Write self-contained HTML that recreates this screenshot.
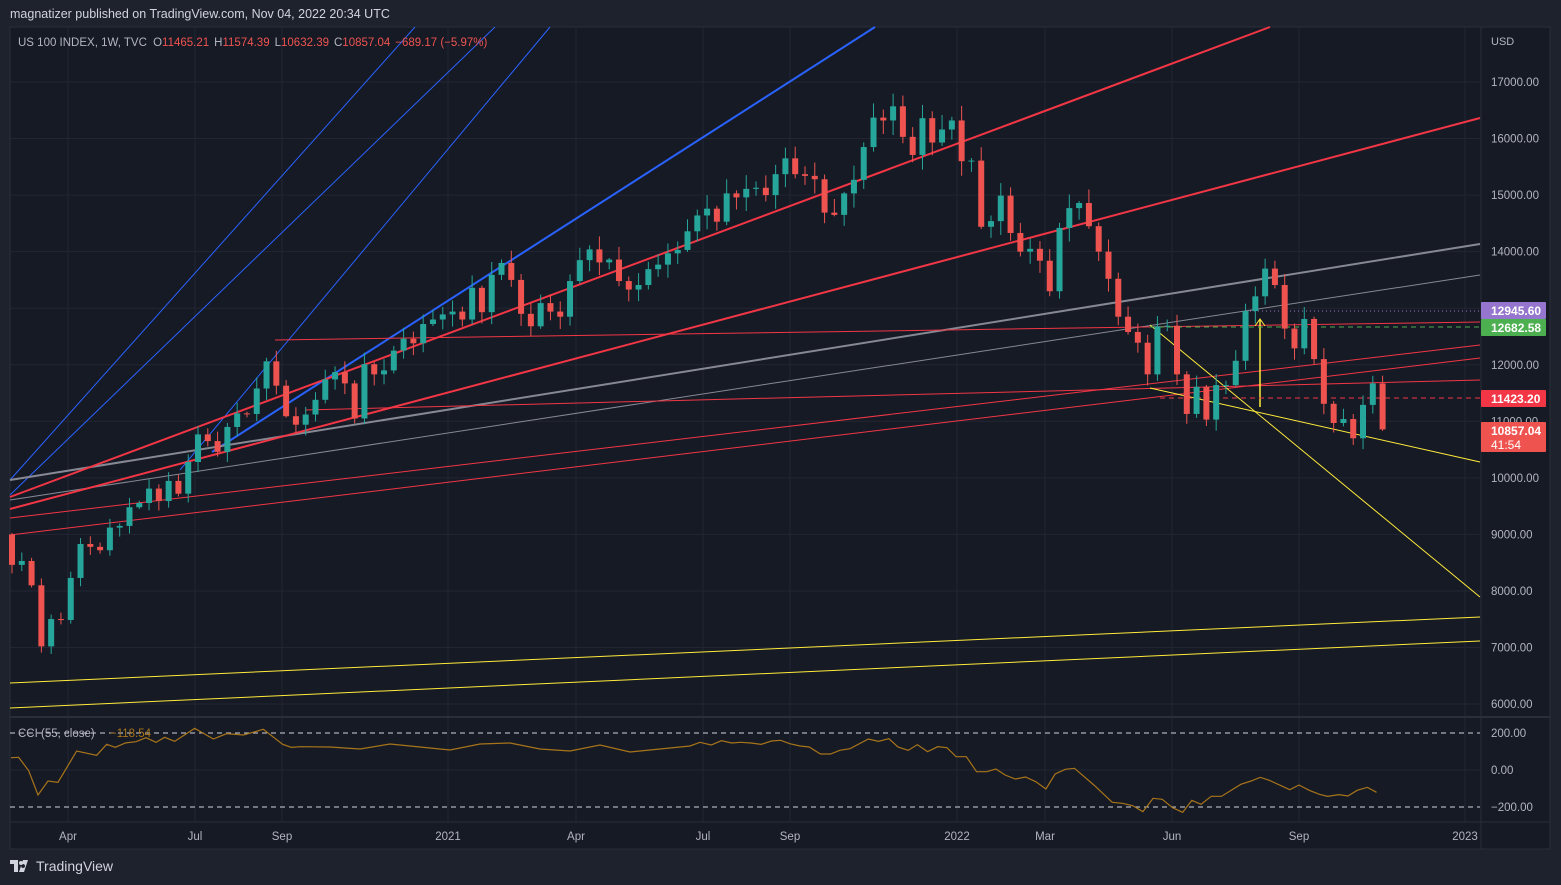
<!DOCTYPE html>
<html><head><meta charset="utf-8">
<style>
html,body{margin:0;padding:0;background:#1e222d;width:1561px;height:885px;overflow:hidden;font-family:"Liberation Sans",sans-serif}
#hdr{position:absolute;left:10px;top:7px;color:#d1d4dc;font-size:12.5px}
#foot{position:absolute;left:10px;top:858px;color:#d1d4dc;font-size:14px;display:flex;align-items:center;gap:4px}
svg{position:absolute;left:0;top:0}
</style></head><body>
<div id="hdr">magnatizer published on TradingView.com, Nov 04, 2022 20:34 UTC</div>
<svg id="s" width="1561" height="885" xmlns="http://www.w3.org/2000/svg" font-family="Liberation Sans, sans-serif"></svg>
<div id="foot"><svg width="22" height="14" style="position:static" viewBox="0 0 22 14"><path d="M0 1h8v12H4V5H0z M9 13l4-12h5l-4 12z M13 5a2 2 0 1 0 0.1 0" fill="#d1d4dc"/><circle cx="11" cy="4" r="2" fill="#d1d4dc"/></svg><span>TradingView</span></div>
<script>
const s=document.getElementById('s');let h='';
const Y=p=>82+(17000-p)*0.05655;
// frame
h+='<rect x="10" y="27" width="1540" height="822" fill="#161a25"/>';
// grid
const vx=[68,195,282,448,576,703,790,957,1045,1172,1299,1465];
vx.forEach(x=>h+=`<line x1="${x}" y1="27" x2="${x}" y2="822" stroke="#232632"/>`);
for(let p=6000;p<=17000;p+=1000){const y=Y(p);h+=`<line x1="10" y1="${y}" x2="1480" y2="${y}" stroke="#232632"/><text x="1491" y="${y+4}" fill="#b2b5be" font-size="11.5">${p}.00</text>`;}
h+='<line x1="10" y1="770" x2="1480" y2="770" stroke="#232632"/>';
h+='<line x1="10" y1="717" x2="1550" y2="717" stroke="#2a2e39" stroke-width="2"/>';
h+='<line x1="10" y1="822" x2="1550" y2="822" stroke="#2a2e39"/>';
h+='<line x1="1481" y1="27" x2="1481" y2="849" stroke="#2a2e39"/>';
h+='<rect x="10" y="27" width="1540" height="822" fill="none" stroke="#2a2e39"/>';
h+='<text x="1491" y="45" fill="#b2b5be" font-size="11">USD</text>';
// lines
const L=(a,b,c,d,col,w,da)=>h+=`<line x1="${a}" y1="${b}" x2="${c}" y2="${d}" stroke="${col}" stroke-width="${w}" ${da?'stroke-dasharray="'+da+'"':''}/>`;
L(10,480,415,27,'#2962ff',1);L(10,495,495,27,'#2962ff',1);L(180,470,550,27,'#2962ff',1);
L(212,452,875,27,'#2962ff',2);
L(10,480,1480,244,'#868993',2);L(10,500,1480,275,'#868993',1);
L(275,340,1480,322,'#f23645',1);L(305,410,1480,380,'#f23645',1);
L(10,518,1480,345,'#f23645',1);L(10,535,1480,358,'#f23645',1);
L(10,497,1270,27,'#f23645',2);L(10,509,1480,118,'#f23645',2);
L(1150,325,1480,597,'#ffeb3b',1);L(1150,388,1480,462,'#ffeb3b',1);
L(10,683,1480,617,'#ffeb3b',1);L(10,708,1480,641,'#ffeb3b',1);
L(1260,407,1260,320,'#ffeb3b',1.5);h+='<path d="M1255 326l5-7 5 7" stroke="#ffeb3b" fill="none"/>';
L(1250,311,1480,311,'#9575cd',1,'1 3');L(1150,327,1480,327,'#4caf50',1,'5 4');L(1160,398,1480,398,'#f23645',1,'5 4');
// candles
const c=[8461,8530,8100,7020,7503,7487,8230,8830,8780,8720,9120,9150,9480,9555,9810,9590,9946,9720,10280,10768,10650,10460,10900,11140,11130,11580,12060,11630,11090,10940,11120,11380,11740,11870,11670,11050,12010,11830,11900,12250,12460,12380,12720,12800,12890,
12940,12800,13360,12930,13590,13800,13500,12900,12680,13090,12940,12850,13480,13850,14040,13810,13860,13480,13330,13410,13690,13770,13970,14030,14360,14640,14760,14530,15030,14960,15110,15130,15000,15370,15650,15370,15340,15280,14690,14650,15030,15270,15850,16370,16320,16570,16030,15710,16360,15930,16160,16320,
15600,15610,14440,14540,14990,14330,14000,14050,13840,13300,14420,14770,14860,14450,14000,13520,12850,12580,12390,11830,12680,12690,11830,11130,11610,11030,11640,11640,12070,12950,13210,13700,13410,12640,12290,12810,12100,11310,10970,11040,10700,11290,11670,10857];
let prev=9000;
c.forEach((cl,i)=>{const x=12+i*9.79;const o=prev;const up=cl>=o;const col=up?'#26a69a':'#ef5350';
const r=Math.abs(Math.sin(i*1.7))*0.025*cl+40, r2=Math.abs(Math.cos(i*2.3))*0.025*cl+40;
const hi=Math.max(o,cl)+r*0.6,lo=Math.min(o,cl)-r2*0.6;
h+=`<line x1="${x}" y1="${Y(hi)}" x2="${x}" y2="${Y(lo)}" stroke="${col}"/>`;
const t=Y(Math.max(o,cl)),b=Y(Math.min(o,cl));
h+=`<rect x="${x-3}" y="${t}" width="6" height="${Math.max(1,b-t)}" fill="${col}"/>`;prev=cl;});
// CCI
h+='<line x1="10" y1="733" x2="1480" y2="733" stroke="#d1d4dc" stroke-dasharray="5 4"/><line x1="10" y1="807" x2="1480" y2="807" stroke="#d1d4dc" stroke-dasharray="5 4"/>';
let pts=[[33,128],[56,127],[86,167],[114,240],[144,198],[174,202],[230,108],[290,121],[320,88],[346,97],[376,84],[408,80],[438,68],[468,82],[494,67],[524,79],[584,40],[640,72],[680,56],[730,60],[790,43],[848,88],[874,97],[900,95]].map(p=>[p[0]/3,715+p[1]/3]);
[[330,747],[360,749],[390,744],[420,747],[450,750],[480,744],[510,743],[540,749],[570,751],[600,745],[630,752],[660,749],[690,746]].forEach(p=>pts.push(p));
[[0,82],[22,90],[42,77],[62,84],[80,82],[100,84],[120,88],[140,78],[158,76],[176,86],[196,93],[214,96],[236,117],[256,117],[274,106],[294,101],[330,72],[350,79],[370,71],[388,96],[408,106],[426,89],[446,110],[466,95],[484,98],[502,125],[522,125],[542,170],[562,170],[580,162],[598,180],[618,192],[638,186],[658,200],[678,222],[696,177],[716,163],[734,160],[772,210],[808,262],[828,265],[848,272],[868,290],[888,250],[906,253],[926,278],[946,292],[964,256],[982,268],[1002,244],[1022,244],[1060,208],[1080,198],[1098,187],[1116,196],[1156,224],[1174,210],[1194,226],[1214,238],[1230,244],[1252,239],[1270,243],[1288,226],[1308,217],[1326,232]].forEach(p=>pts.push([700+p[0]/1.96,715+p[1]/3]));
h+=`<polyline points="${pts.map(p=>p.join(',')).join(' ')}" fill="none" stroke="#a8741a" stroke-width="1.2"/>`;
h+='<text x="18" y="737" fill="#b2b5be" font-size="11.5">CCI (55, close)</text><text x="110" y="737" fill="#a8741a" font-size="11.5">−118.54</text>';
[[200,733,'200.00'],[0,770,'0.00'],[-200,807,'−200.00']].forEach(a=>h+=`<text x="${a[2]=='0.00'?1491:1491}" y="${a[1]+4}" fill="#b2b5be" font-size="11.5">${a[2]}</text>`);
// time labels
[['Apr',68],['Jul',195],['Sep',282],['2021',448],['Apr',576],['Jul',703],['Sep',790],['2022',957],['Mar',1045],['Jun',1172],['Sep',1299],['2023',1465]].forEach(a=>h+=`<text x="${a[1]}" y="840" fill="#b2b5be" font-size="11.5" text-anchor="middle">${a[0]}</text>`);
// legend
h+='<text x="18" y="46" font-size="11.5" fill="#b2b5be">US 100 INDEX, 1W, TVC <tspan dx="3">O</tspan><tspan fill="#ef5350">11465.21</tspan><tspan dx="5">H</tspan><tspan fill="#ef5350">11574.39</tspan><tspan dx="5">L</tspan><tspan fill="#ef5350">10632.39</tspan><tspan dx="5">C</tspan><tspan fill="#ef5350">10857.04</tspan><tspan dx="5" fill="#ef5350">−689.17 (−5.97%)</tspan></text>';
// price tags
const tag=(y,hh,col,t,t2)=>{h+=`<rect x="1481" y="${y}" width="65" height="${hh}" rx="1" fill="${col}"/><text x="1491" y="${y+13}" fill="#fff" font-size="12" font-weight="bold">${t}</text>`;if(t2)h+=`<text x="1491" y="${y+27}" fill="#fff" font-size="12">${t2}</text>`;};
tag(302,17,'#9575cd','12945.60');tag(319,17,'#4caf50','12682.58');tag(390,17,'#f23645','11423.20');tag(422,30,'#ef5350','10857.04','41:54');
s.innerHTML=h;
</script>
</body></html>
